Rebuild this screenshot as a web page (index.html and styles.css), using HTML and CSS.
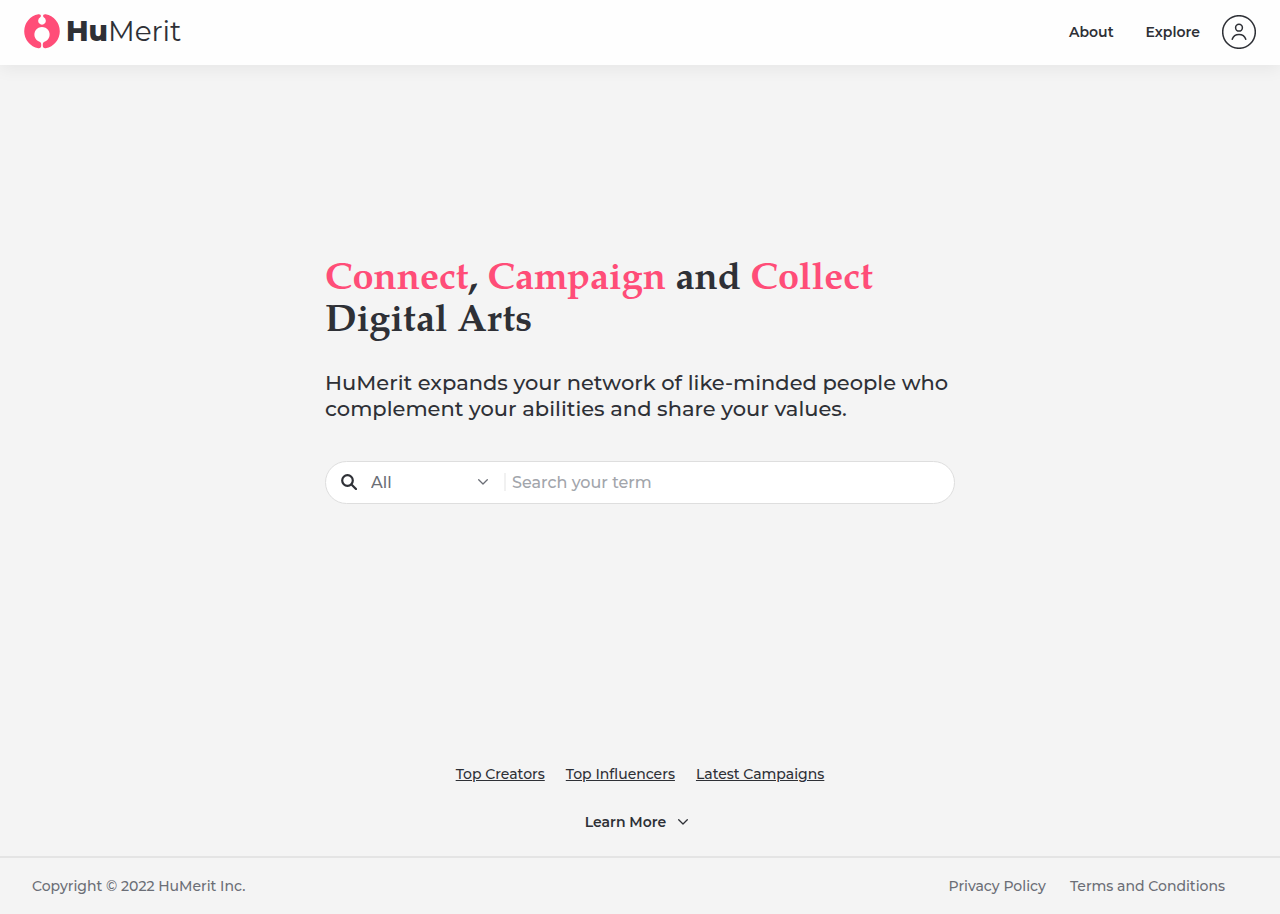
FILE: index.html
```html
<!DOCTYPE html>
<html lang="en">
<head>
    <meta charset="UTF-8">
    <meta name="viewport" content="width=device-width, initial-scale=1.0">
    <title>HuMerit</title>
    <link rel="stylesheet" href="styles.css">
</head>
<body>
    <header class="header">
        <a class="logo" href="#">
            <svg class="logo-mark" viewBox="0 0 36 35" aria-hidden="true">
                <path d="M14.300.2C16.200-.1 17 1 16.900 2.100c0 .7-.3 1.100-.9 1.500A3.800 3.800 0 1 0 20 3.600c-.6-.4-.9-.8-.9-1.500C19 1 19.800-.1 21.700.2a17.300 17.300 0 0 1 0 34c-1.900.3-2.900-.8-2.900-2.400v-1.500c0-1.200.5-1.900 1.600-2.500a7.600 7.600 0 1 0-4.800 0c1.100.6 1.600 1.300 1.600 2.500v1.500c0 1.600-1 2.700-2.900 2.400a17.300 17.300 0 0 1 0-34z"/>
            </svg>
            <span class="logo-text"><b>Hu</b>Merit</span>
        </a>
        <nav class="nav">
            <a href="#">About</a>
            <a href="#">Explore</a>
            <button class="profile" type="button" aria-label="Profile">
                <svg viewBox="0 0 34 34" aria-hidden="true">
                    <circle cx="17" cy="17" r="16.300"/>
                    <circle cx="17" cy="12.700" r="3.400"/>
                    <path d="M10.200 24.200c1-3 3.600-4.800 6.800-4.800s5.800 1.800 6.800 4.800"/>
                </svg>
            </button>
        </nav>
    </header>

    <main class="main">
        <section class="hero">
            <h1><em>Connect</em>, <em>Campaign</em> and <em>Collect</em><br>Digital Arts</h1>
            <p>HuMerit expands your network of like-minded people who complement your abilities and share your values.</p>
            <form class="search">
                <svg class="search-icon" viewBox="0 0 16 16" aria-hidden="true">
                    <circle cx="6.500" cy="6.500" r="5.300"/>
                    <path d="M10.500 10.500l4.500 4.500"/>
                </svg>
                <div class="category">
                    <select aria-label="Category">
                        <option>All</option>
                        <option>Creators</option>
                        <option>Influencers</option>
                        <option>Campaigns</option>
                    </select>
                    <svg class="chevron" viewBox="0 0 10 6" aria-hidden="true"><path d="M.7.7L5 5 9.300.7"/></svg>
                </div>
                <input type="text" placeholder="Search your term" aria-label="Search your term">
            </form>
        </section>

        <div class="quick-links">
            <a href="#">Top Creators</a>
            <a href="#">Top Influencers</a>
            <a href="#">Latest Campaigns</a>
        </div>
        <button class="learn-more" type="button">
            Learn More
            <svg class="chevron" viewBox="0 0 10 6" aria-hidden="true"><path d="M.7.7L5 5 9.300.7"/></svg>
        </button>
    </main>

    <footer class="footer">
        <span>Copyright © 2022 HuMerit Inc.</span>
        <div class="footer-links">
            <a href="#">Privacy Policy</a>
            <a href="#">Terms and Conditions</a>
        </div>
    </footer>
</body>
</html>
```
FILE: styles.css
```css
* {
    box-sizing: border-box;
}

body {
    margin: 0;
    min-height: 100vh;
    display: flex;
    flex-direction: column;
    font-family: Montserrat, Inter, sans-serif;
    font-size: 14px;
    font-weight: 500;
    background-color: #f4f4f4;
    color: #2e3036;
}

a {
    color: inherit;
    text-decoration: none;
}

button {
    font: inherit;
    color: inherit;
    background: none;
    border: 0;
    padding: 0;
    cursor: pointer;
}

svg {
    display: block;
    fill: none;
    stroke: currentColor;
}

/* Header */
.header {
    display: flex;
    align-items: center;
    justify-content: space-between;
    height: 65px;
    padding: 0 24px 1px;
    background-color: #fefefe;
    box-shadow: 0 4px 16px rgba(0, 0, 0, 0.06);
}

.logo {
    display: flex;
    align-items: center;
    gap: 6px;
    padding-bottom: 2px;
}

.logo-mark {
    width: 36px;
    height: 35px;
    fill: #ff4d78;
    stroke: none;
}

.logo-text {
    font-size: 28px;
    line-height: 36px;
    font-weight: 400;
}

.logo-text b {
    font-weight: 800;
}

.nav {
    display: flex;
    align-items: center;
    font-weight: 600;
    gap: 32px;
}

.profile {
    margin-left: -10px;
}

.profile svg {
    width: 34px;
    height: 34px;
    stroke-width: 1.5;
    stroke-linecap: round;
}

/* Landing content */
.main {
    flex: 1;
    display: flex;
    flex-direction: column;
    align-items: center;
    padding: 0 24px 24px;
}

.hero {
    width: 100%;
    max-width: 630px;
    margin: auto 0;
    padding-bottom: 66px;
}

h1 {
    margin: 0 0 26px;
    font-family: "Palatino Linotype", Palatino, "TeX Gyre Pagella", P052, "Liberation Serif", serif;
    font-size: 38px;
    line-height: 42px;
    font-weight: bold;
}

h1 em {
    font-style: normal;
    color: #ff4d78;
}

.hero p {
    margin: 0 0 39px;
    font-size: 21px;
    line-height: 26px;
}

.search {
    display: flex;
    align-items: center;
    height: 43px;
    padding: 0 15px;
    background-color: #fff;
    border: 1px solid #dedede;
    border-radius: 22px;
    color: #6b6e76;
}

.search-icon {
    width: 16px;
    height: 16px;
    color: #2e3036;
    stroke-width: 2.2;
    stroke-linecap: round;
}

.category {
    display: flex;
    align-items: center;
    width: 135px;
    height: 18px;
    margin-left: 14px;
    border-right: 2px solid #f1f1f1;
}

.search select,
.search input {
    flex: 1;
    min-width: 0;
    padding: 0;
    border: 0;
    outline: 0;
    background: none;
    font: inherit;
    font-size: 16px;
    color: inherit;
}

.search select {
    appearance: none;
}

.search input {
    margin-left: 6px;
}

.search input::placeholder {
    color: #a2a5ab;
}

.chevron {
    width: 10px;
    height: 6px;
    stroke-width: 1.3;
    stroke-linecap: round;
    stroke-linejoin: round;
}

.category .chevron {
    margin-right: 16px;
}

.quick-links {
    display: flex;
    gap: 21px;
    margin-bottom: 28px;
    line-height: 20px;
}

.quick-links a {
    text-decoration: underline;
}

.learn-more {
    display: flex;
    align-items: center;
    gap: 12px;
    margin-right: 7px;
    line-height: 20px;
    font-weight: 600;
}

/* Footer */
.footer {
    display: flex;
    align-items: center;
    justify-content: space-between;
    height: 58px;
    padding: 0 55px 0 32px;
    border-top: 2px solid #e4e4e4;
    color: #6b6e76;
}

.footer-links {
    display: flex;
    gap: 24px;
}
```
